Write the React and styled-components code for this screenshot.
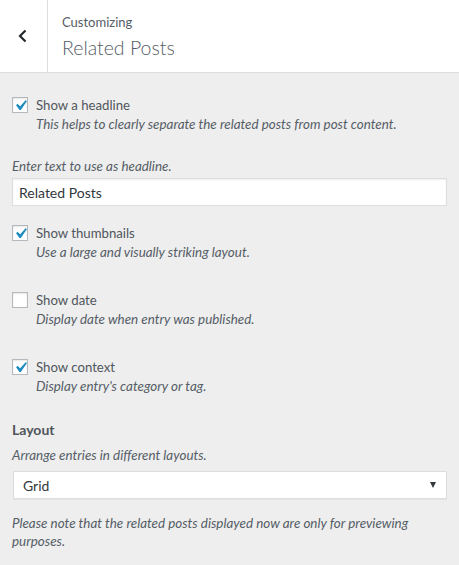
import React from 'react'
import styled, {createGlobalStyle} from 'styled-components'

const GlobalStyle = createGlobalStyle`
    html, body {
        margin: 0;
        padding: 0;
        background: #eee;
    }
    body {
        font-family: Lato, "Open Sans", "Noto Sans", sans-serif;
        color: #555d66;
        width: 459px;
        height: 565px;
        overflow: hidden;
    }
    * {
        box-sizing: border-box;
    }
`;

const Panel = styled.div`
    width: 459px;
    min-height: 565px;
    background: #eee;
`;

const Header = styled.div`
    display: flex;
    height: 73px;
    background: #fff;
    border-bottom: 1px solid #ddd;
`;

const BackButton = styled.button`
    width: 48px;
    display: flex;
    align-items: center;
    justify-content: center;
    background: #fff;
    border: none;
    border-right: 1px solid #ddd;
    padding: 0 2px 0 0;
    color: #23282d;
    cursor: pointer;
`;

const TitleBlock = styled.div`
    display: flex;
    flex-direction: column;
    padding: 13px 0 0 14px;
`;

const Eyebrow = styled.span`
    font-size: 13px;
    line-height: 18px;
    color: #555d66;
`;

const Title = styled.h3`
    margin: 4px 0 0;
    font-size: 19.5px;
    line-height: 26px;
    font-weight: 300;
    color: #555d66;
`;

const Body = styled.div`
    padding: 22px 12px 0;
`;

const Control = styled.div`
    margin-bottom: ${p => p.$gap}px;
`;

const CheckRow = styled.label`
    display: flex;
    align-items: center;
    gap: 8px;
    font-size: 13.2px;
    line-height: 20px;
    color: #50565c;
`;

const Box = styled.span`
    width: 16px;
    height: 16px;
    display: flex;
    align-items: center;
    justify-content: center;
    background: #fff;
    border: 1px solid #b4b9be;
    box-shadow: inset 0 1px 2px rgba(0, 0, 0, 0.1);
    flex-shrink: 0;
    overflow: visible;
`;

const Description = styled.p`
    margin: 0;
    padding-left: ${p => p.$indent || 0}px;
    font-size: 13.4px;
    line-height: 18px;
    font-style: italic;
    color: #555d66;
`;

const TextInput = styled.input`
    display: block;
    width: 100%;
    height: 28px;
    margin-top: 3px;
    padding: 0 6px;
    font-family: inherit;
    font-size: 14px;
    color: #32373c;
    background: #fff;
    border: 1px solid #ddd;
    box-shadow: inset 0 1px 2px rgba(0, 0, 0, 0.07);
    outline: none;
`;

const Heading = styled.div`
    font-size: 14px;
    line-height: 20px;
    font-weight: 700;
    color: #50565c;
    margin-bottom: 6px;
`;

const SelectBox = styled.div`
    display: flex;
    align-items: center;
    height: 28px;
    margin: 7px 0 15px 1px;
    background: #fff;
    border: 1px solid #ddd;
    box-shadow: 0 1px 0 rgba(0, 0, 0, 0.04);
`;

const Select = styled.select`
    flex: 1;
    height: 100%;
    padding: 0 9px;
    font-family: inherit;
    font-size: 14px;
    color: #32373c;
    background: transparent;
    border: none;
    appearance: none;
    outline: none;
`;

const Arrow = styled.span`
    width: 0;
    height: 0;
    margin-right: 10px;
    border-left: 3.5px solid transparent;
    border-right: 3.5px solid transparent;
    border-top: 6px solid #32373c;
`;

const Check = () => (
    <svg width="21" height="21" viewBox="0 0 20 20" style={{flexShrink: 0, margin: '0 -3px'}}>
        <path d="M14.83 4.89l1.34.94-5.81 8.38H9.02L5.78 9.67l1.34-1.25 2.57 2.4z" fill="#1e8cbe"/>
    </svg>
)

const Checkbox = ({checked, label}) => (
    <CheckRow>
        <Box>{checked && <Check/>}</Box>
        {label}
    </CheckRow>
)

const toggles = [
    {label: 'Show thumbnails', text: 'Use a large and visually striking layout.', checked: true},
    {label: 'Show date', text: 'Display date when entry was published.', checked: false},
    {label: 'Show context', text: "Display entry's category or tag.", checked: true},
]

const App = () => {
    return (
        <Panel>
            <GlobalStyle/>
            <Header>
                <BackButton aria-label="Back">
                    <svg width="16" height="16" viewBox="0 0 16 16">
                        <path d="M10.5 2.5L5 8l5.5 5.5" fill="none" stroke="#23282d" strokeWidth="2.2"/>
                    </svg>
                </BackButton>
                <TitleBlock>
                    <Eyebrow>Customizing</Eyebrow>
                    <Title>Related Posts</Title>
                </TitleBlock>
            </Header>
            <Body>
                <Control $gap={24}>
                    <Checkbox checked label="Show a headline"/>
                    <Description $indent={24}>This helps to clearly separate the related posts from post content.</Description>
                </Control>
                <Control $gap={17}>
                    <Description>Enter text to use as headline.</Description>
                    <TextInput defaultValue="Related Posts"/>
                </Control>
                {toggles.map((t, i) => (
                    <Control key={t.label} $gap={i === toggles.length - 1 ? 25 : 29}>
                        <Checkbox checked={t.checked} label={t.label}/>
                        <Description $indent={24}>{t.text}</Description>
                    </Control>
                ))}
                <Control $gap={0}>
                    <Heading>Layout</Heading>
                    <Description>Arrange entries in different layouts.</Description>
                    <SelectBox>
                        <Select defaultValue="grid">
                            <option value="grid">Grid</option>
                            <option value="list">List</option>
                        </Select>
                        <Arrow/>
                    </SelectBox>
                    <Description>Please note that the related posts displayed now are only for previewing purposes.</Description>
                </Control>
            </Body>
        </Panel>
    )
}

export default App
